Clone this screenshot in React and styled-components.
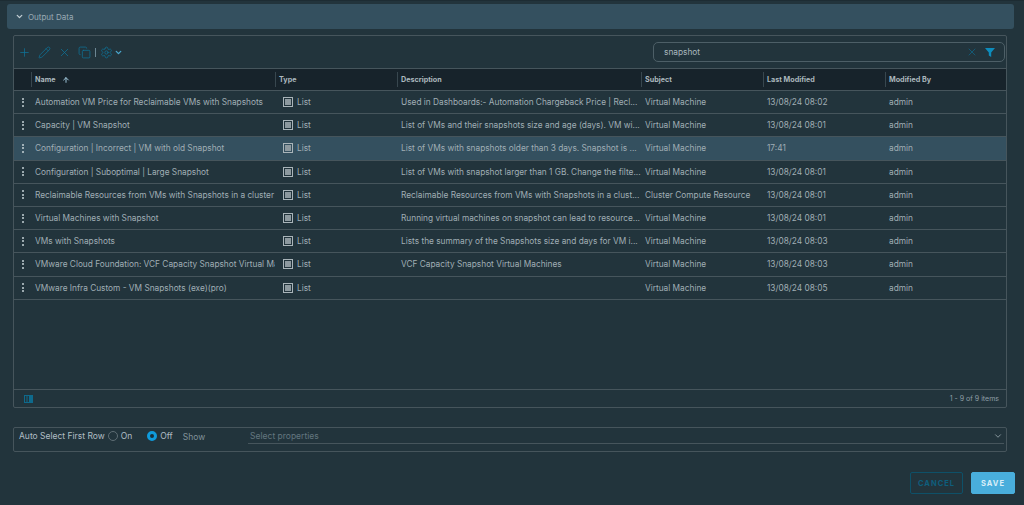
import React from "react";
import styled, { createGlobalStyle } from "styled-components";
import { ChevronDown, ArrowUp, Plus, Pencil, X, Copy, Settings } from "lucide-react";

const rows = [
  ["Automation VM Price for Reclaimable VMs with Snapshots", "Used in Dashboards:- Automation Chargeback Price | Recl...", "Virtual Machine", "13/08/24 08:02"],
  ["Capacity | VM Snapshot", "List of VMs and their snapshots size and age (days). VM wi...", "Virtual Machine", "13/08/24 08:01"],
  ["Configuration | Incorrect | VM with old Snapshot", "List of VMs with snapshots older than 3 days. Snapshot is ...", "Virtual Machine", "17:41", true],
  ["Configuration | Suboptimal | Large Snapshot", "List of VMs with snapshot larger than 1 GB. Change the filte...", "Virtual Machine", "13/08/24 08:01"],
  ["Reclaimable Resources from VMs with Snapshots in a cluster", "Reclaimable Resources from VMs with Snapshots in a clust...", "Cluster Compute Resource", "13/08/24 08:01"],
  ["Virtual Machines with Snapshot", "Running virtual machines on snapshot can lead to resource...", "Virtual Machine", "13/08/24 08:01"],
  ["VMs with Snapshots", "Lists the summary of the Snapshots size and days for VM i...", "Virtual Machine", "13/08/24 08:03"],
  ["VMware Cloud Foundation: VCF Capacity Snapshot Virtual Ma", "VCF Capacity Snapshot Virtual Machines", "Virtual Machine", "13/08/24 08:03"],
  ["VMware Infra Custom - VM Snapshots (exe)(pro)", "", "Virtual Machine", "13/08/24 08:05"],
];

const columns = "17px 244px 122px 244px 122px 122px 121px";

const GlobalStyle = createGlobalStyle`
  html, body { margin: 0; padding: 0; height: 100%; background: #22343c; }
  body { font-family: "Inter", "Noto Sans", sans-serif; overflow: hidden; }
`;

const Page = styled.div`
  width: 1024px;
  height: 505px;
  padding: 4px 10px 0 7px;
  box-sizing: border-box;
  display: flex;
  flex-direction: column;
  border-top: 1px solid #1d2c33;
`;

const SectionBar = styled.div`
  height: 25px;
  margin-top: -1px;
  flex: none;
  display: flex;
  align-items: center;
  gap: 4px;
  padding-left: 8px;
  background: #34505f;
  border-radius: 3px;
  color: #9aabb4;
  font-size: 8px;
`;

const GridBox = styled.div`
  margin: 6px 7px 0 6px;
  height: 373px;
  flex: none;
  box-sizing: border-box;
  border: 1px solid #46555c;
  border-radius: 2px;
  display: flex;
  flex-direction: column;
`;

const Toolbar = styled.div`
  height: 33px;
  flex: none;
  box-sizing: border-box;
  display: flex;
  align-items: center;
  justify-content: space-between;
  padding: 0 1px 0 4px;
  border-bottom: 1px solid #46555c;
`;

const ToolIcons = styled.div`
  display: flex;
  align-items: center;
  gap: 7px;
  color: #0e7296;
`;

const ToolDivider = styled.span`
  width: 1px;
  height: 9px;
  margin: 0 -3px 0 -3px;
  background: #6d8794;
`;

const GearGroup = styled.span`
  display: flex;
  align-items: center;
  gap: 1px;
`;

const SearchBox = styled.div`
  width: 352px;
  height: 20px;
  box-sizing: border-box;
  display: flex;
  align-items: center;
  gap: 7px;
  padding: 0 9px 0 10px;
  border: 1px solid #4d5f67;
  border-radius: 5px;
  color: #a9b8bf;
  font-size: 8.3px;
`;

const SearchText = styled.span`
  flex: 1;
`;

const HeaderRow = styled.div`
  height: 22px;
  flex: none;
  display: grid;
  grid-template-columns: ${columns};
  align-items: center;
  background: #17232b;
  border-bottom: 1px solid #46555c;
  box-sizing: border-box;
`;

const HeaderCell = styled.div`
  height: 15px;
  display: flex;
  align-items: center;
  gap: 6px;
  padding-left: 3px;
  border-left: 1px solid #38474f;
  color: #abb8be;
  font-size: 7.2px;
  font-weight: 700;
  &:first-child { border-left: none; }
`;

const Body = styled.div`
  flex: 1;
  min-height: 0;
`;

const Row = styled.div`
  height: 23.2px;
  box-sizing: border-box;
  display: grid;
  grid-template-columns: ${columns};
  align-items: center;
  border-bottom: 1px solid #46555c;
  background: ${(p) => (p.$selected ? "#34505f" : "transparent")};
  color: #a0aeb5;
  font-size: 8.3px;
`;

const Handle = styled.div`
  display: flex;
  flex-direction: column;
  align-items: center;
  gap: 1.5px;
  & > i {
    width: 2px;
    height: 2px;
    border-radius: 50%;
    background: #c5d0d5;
  }
`;

const Cell = styled.div`
  padding-left: 4px;
  white-space: nowrap;
  overflow: hidden;
  min-width: 0;
`;

const TypeCell = styled(Cell)`
  display: flex;
  align-items: center;
  gap: 4px;
  padding-left: 8px;
`;

const TypeIcon = styled.span`
  width: 10px;
  height: 10px;
  box-sizing: border-box;
  border: 1px solid #a9b4b9;
  padding: 1px;
  &::after {
    content: "";
    display: block;
    width: 100%;
    height: 100%;
    background: #8d999f;
  }
`;

const Footer = styled.div`
  height: 18px;
  flex: none;
  box-sizing: border-box;
  border-top: 1px solid #46555c;
  display: flex;
  align-items: center;
  justify-content: space-between;
  padding: 0 7px 0 10px;
  color: #8f9fa7;
  font-size: 7px;
`;

const ColumnToggle = styled.svg`
  display: block;
`;

const OptionsBox = styled.div`
  margin: 19px 7px 0 6px;
  height: 25px;
  flex: none;
  box-sizing: border-box;
  border: 1px solid #46555c;
  border-radius: 2px;
  display: flex;
  align-items: center;
  padding: 0 2px 7px 5px;
  color: #b0bdc4;
  font-size: 8.5px;
`;

const RadioGroup = styled.label`
  display: flex;
  align-items: center;
  gap: 3px;
  margin-left: ${(p) => p.$gap}px;
`;

const Radio = styled.span`
  width: 10px;
  height: 10px;
  box-sizing: border-box;
  border-radius: 50%;
  border: ${(p) => (p.$on ? "3px solid #0f9bdc" : "1px solid #5e6d74")};
  background: ${(p) => (p.$on ? "#17303c" : "transparent")};
`;

const ShowLabel = styled.span`
  margin: 2px 0 0 10px;
  color: #81929a;
`;

const SelectField = styled.div`
  flex: 1;
  height: 16px;
  margin-left: 43px;
  box-sizing: border-box;
  display: flex;
  align-items: center;
  justify-content: space-between;
  border-bottom: 1px solid #46555c;
  color: #63767f;
  padding: 0 1px 0 2px;
`;

const Actions = styled.div`
  margin: 20px -1px 0 0;
  display: flex;
  justify-content: flex-end;
  gap: 8px;
`;

const Button = styled.button`
  height: 22px;
  padding: 0;
  width: ${(p) => (p.$primary ? "44px" : "53px")};
  box-sizing: border-box;
  border: 1px solid ${(p) => (p.$primary ? "#49aedc" : "#0e5068")};
  border-radius: 2px;
  background: ${(p) => (p.$primary ? "#49aedc" : "transparent")};
  color: ${(p) => (p.$primary ? "#d9eef8" : "#0e5e7c")};
  font-family: inherit;
  font-size: 7.5px;
  font-weight: 700;
  letter-spacing: 1px;
`;

const App = () => (
  <>
    <GlobalStyle />
    <Page>
      <SectionBar>
        <ChevronDown size={9} strokeWidth={3.5} color="#c2ced4" />
        Output Data
      </SectionBar>
      <GridBox>
        <Toolbar>
          <ToolIcons>
            <Plus size={13} strokeWidth={1.4} />
            <Pencil size={13} strokeWidth={1.4} />
            <X size={13} strokeWidth={1.4} />
            <Copy size={13} strokeWidth={1.4} />
            <ToolDivider />
            <GearGroup>
              <Settings size={13} strokeWidth={1.4} />
              <ChevronDown size={9} strokeWidth={3.5} color="#4aa8d0" />
            </GearGroup>
          </ToolIcons>
          <SearchBox>
            <SearchText>snapshot</SearchText>
            <X size={12} strokeWidth={1.4} color="#0e6a8c" />
            <svg width="10" height="9" viewBox="0 0 10 9">
              <path d="M0 0h10L6.2 4.4V9L3.8 7.6V4.4z" fill="#0d8cbc" />
            </svg>
          </SearchBox>
        </Toolbar>
        <HeaderRow>
          <HeaderCell />
          <HeaderCell>
            Name <ArrowUp size={8} strokeWidth={3} color="#9fc6da" />
          </HeaderCell>
          <HeaderCell>Type</HeaderCell>
          <HeaderCell>Description</HeaderCell>
          <HeaderCell>Subject</HeaderCell>
          <HeaderCell>Last Modified</HeaderCell>
          <HeaderCell>Modified By</HeaderCell>
        </HeaderRow>
        <Body>
          {rows.map(([name, desc, subject, modified, selected]) => (
            <Row key={name} $selected={selected}>
              <Handle>
                <i />
                <i />
                <i />
              </Handle>
              <Cell>{name}</Cell>
              <TypeCell>
                <TypeIcon />
                List
              </TypeCell>
              <Cell>{desc}</Cell>
              <Cell>{subject}</Cell>
              <Cell>{modified}</Cell>
              <Cell>admin</Cell>
            </Row>
          ))}
        </Body>
        <Footer>
          <ColumnToggle width="9" height="8" viewBox="0 0 9 8">
            <rect x="0.5" y="0.5" width="8" height="7" fill="none" stroke="#0e6a8c" />
            <path d="M3 0v8" stroke="#0e6a8c" />
            <rect x="5" y="0" width="4" height="8" fill="#0e6a8c" />
          </ColumnToggle>
          1 - 9 of 9 items
        </Footer>
      </GridBox>
      <OptionsBox>
        Auto Select First Row
        <RadioGroup $gap={3}>
          <Radio />
          On
        </RadioGroup>
        <RadioGroup $gap={15}>
          <Radio $on />
          Off
        </RadioGroup>
        <ShowLabel>Show</ShowLabel>
        <SelectField>
          Select properties
          <ChevronDown size={10} strokeWidth={2} color="#9aa8af" />
        </SelectField>
      </OptionsBox>
      <Actions>
        <Button>CANCEL</Button>
        <Button $primary>SAVE</Button>
      </Actions>
    </Page>
  </>
);

export default App;
